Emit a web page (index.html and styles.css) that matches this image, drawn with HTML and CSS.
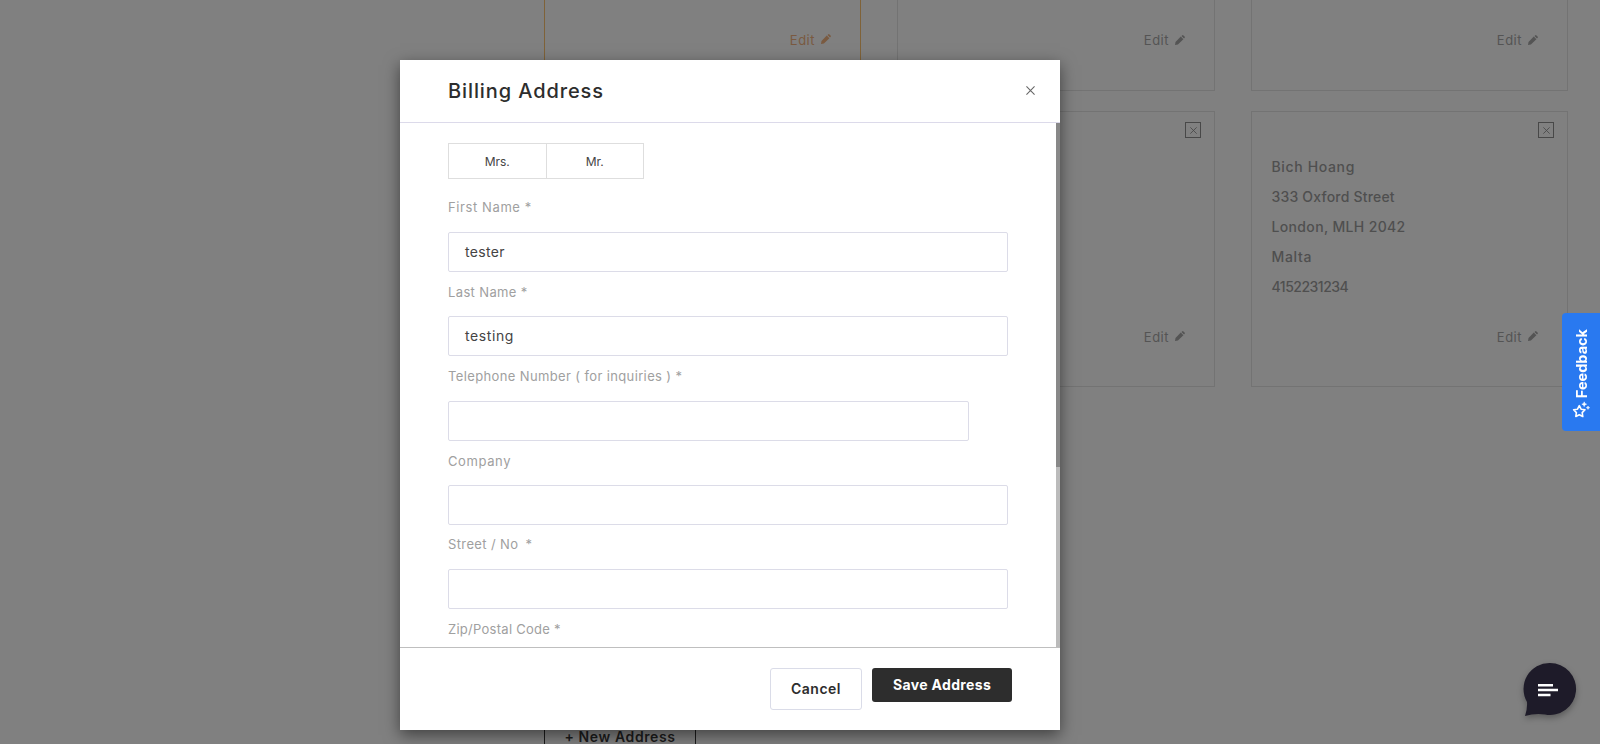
FILE: index.html
```html
<!DOCTYPE html>
<html lang="en">
<head>
<meta charset="utf-8">
<title>Billing Address</title>
<link rel="stylesheet" href="styles.css">
</head>
<body>
<svg class="sprite" aria-hidden="true">
  <symbol id="pencil" viewBox="0 0 10 10"><path d="M0 10l.5-2.900L5.800 1.600 8.400 4.200 2.900 9.500zM6.500 1L7.400.2q.4-.3.800 0L9.800 1.800q.3.400 0 .8L9 3.500z" fill="currentColor"/></symbol>
  <symbol id="cross" viewBox="0 0 10 10"><path d="M.5.5l9 9M9.500.5l-9 9" stroke="currentColor" stroke-width="1.200" fill="none"/></symbol>
</svg>

<main class="page">
  <div class="cards">
    <article class="card card-selected"><a class="edit">Edit <svg><use href="#pencil"/></svg></a></article>
    <article class="card"><a class="edit">Edit <svg><use href="#pencil"/></svg></a></article>
    <article class="card"><a class="edit">Edit <svg><use href="#pencil"/></svg></a></article>
    <article class="card"></article>
    <article class="card">
      <span class="remove"><svg><use href="#cross"/></svg></span>
      <a class="edit">Edit <svg><use href="#pencil"/></svg></a>
    </article>
    <article class="card">
      <span class="remove"><svg><use href="#cross"/></svg></span>
      <p class="address"><span class="name">Bich Hoang</span><span class="street">333 Oxford Street</span><span class="city">London, MLH 2042</span><span class="name">Malta</span><span class="phone">4152231234</span></p>
      <a class="edit">Edit <svg><use href="#pencil"/></svg></a>
    </article>
  </div>
  <button class="new-address">+ New Address</button>
</main>

<div class="backdrop">
  <section class="modal">
    <header class="modal-head">
      <h1>Billing Address</h1>
      <svg class="close"><use href="#cross"/></svg>
    </header>
    <div class="modal-body">
      <form class="form">
        <div class="titles"><span>Mrs.</span><span>Mr.</span></div>
        <label class="raised wide">First Name <i>*</i></label>
        <div class="input">tester</div>
        <label>Last Name <i>*</i></label>
        <div class="input roomy">testing</div>
        <label class="tall">Telephone Number ( for inquiries ) <i>*</i></label>
        <div class="input short"></div>
        <label class="wide">Company</label>
        <div class="input"></div>
        <label class="raised">Street / No &nbsp;<i class="near">*</i></label>
        <div class="input"></div>
        <label class="tight">Zip/Postal Code <i>*</i></label>
      </form>
      <div class="track"><div class="thumb"></div></div>
    </div>
    <footer class="modal-foot">
      <button class="cancel">Cancel</button>
      <button class="save">Save Address</button>
    </footer>
  </section>
</div>

<div class="feedback">
  <svg viewBox="0 0 18 18"><path d="M7.300 4.700l1.800 3.500 3.900.6-2.800 2.800.6 3.900-3.500-1.800-3.500 1.800.6-3.900L1.600 8.800l3.900-.6z" fill="none" stroke="#fff" stroke-width="1.600" stroke-linejoin="round"/><path d="M12.200.8l.7 1.700 1.700.7-1.700.7-.7 1.700-.7-1.700-1.700-.7 1.700-.7zM16 5l.5 1.200 1.200.5-1.200.5-.5 1.200-.5-1.200-1.200-.5 1.200-.5z" fill="#fff" stroke="#fff" stroke-width=".5"/></svg>
  <span>Feedback</span>
</div>

<svg class="chat" viewBox="0 0 56 56"><path d="M28 1a26 26 0 1 1-5 51.500Q13 51 3 54 5.500 47 5 40A26 26 0 0 1 28 1z" fill="#1e1b29"/><path d="M16 23.300h15M16 28h20M16 32.900h12.500" stroke="#fff" stroke-width="2.500"/></svg>
</body>
</html>
```
FILE: styles.css
```css
* { box-sizing: border-box; }
body {
  margin: 0;
  width: 1600px;
  height: 744px;
  overflow: hidden;
  background: #808080;
  font-family: Inter, "Open Sans", sans-serif;
  color: #2d2d2d;
}
.sprite { display: none; }
button { font: inherit; padding: 0; }

.page { padding-left: 544px; height: 744px; overflow: hidden; }
.cards {
  display: grid;
  grid-template-columns: 317px 318px 317px;
  grid-template-rows: 91px 276px;
  gap: 20px 36px;
}
.card { position: relative; border: 1px solid #737373; }
.card:nth-child(-n+3) { border-top: 0; }
.card-selected { border-color: #7f6238; }
.edit {
  position: absolute;
  right: 29px;
  bottom: 40px;
  display: flex;
  align-items: center;
  gap: 6px;
  font-size: 13px;
  line-height: 20px;
  letter-spacing: .5px;
  color: #545454;
}
.card:nth-child(n+4) .edit { bottom: 39px; }
.edit svg { width: 10px; height: 10px; margin-top: -1px; }
.card:nth-child(n+4) .edit svg, .card-selected .edit svg { margin-top: -3px; }
.card-selected .edit { color: #7a5a40; }
.remove {
  position: absolute;
  top: 10px;
  right: 13px;
  width: 16px;
  height: 16px;
  border: 1px solid #484848;
  color: #484848;
  display: grid;
  place-items: center;
}
.remove svg { width: 7px; height: 7px; }
.address {
  margin: 40px 0 0 19.500px;
  font-size: 14px;
  font-weight: 500;
  line-height: 30px;
  color: #4f4f4f;
}
.address span { display: block; }
.name { letter-spacing: .65px; }
.street { letter-spacing: .2px; }
.city { letter-spacing: .35px; }
.phone { letter-spacing: -.5px; }
.new-address {
  display: block;
  width: 152px;
  height: 44px;
  margin-top: 328px;
  border: 1px solid #1c1c1c;
  background: none;
  font-size: 14px;
  font-weight: 600;
  line-height: 16px;
  letter-spacing: .6px;
  color: #1c1c1c;
}

.backdrop { position: absolute; inset: 0; padding: 60px 0 0 400px; }
.modal {
  width: 660px;
  height: 670px;
  display: flex;
  flex-direction: column;
  background: #fff;
  box-shadow: 0 5px 15px rgba(0, 0, 0, .5);
}
.modal-head {
  height: 63px;
  display: flex;
  align-items: center;
  justify-content: space-between;
  padding: 0 25px 0 48px;
  border-bottom: 1px solid #dcdaea;
}
h1 { margin: 0; font-size: 20px; font-weight: 500; letter-spacing: .9px; }
.close { width: 9px; height: 9px; margin-top: -1px; color: #666; }
.modal-body { height: 524px; display: flex; justify-content: space-between; overflow: hidden; }
.form { width: 608px; padding: 20px 0 0 48px; }
.titles { display: flex; width: 196px; height: 36px; border: 1px solid #dedede; margin-bottom: 9px; }
.titles span { flex: 1; text-align: center; font-size: 12px; line-height: 35px; color: #444; }
.titles span + span { border-left: 1px solid #dedede; }
label {
  display: block;
  height: 44px;
  padding-top: 10px;
  font-size: 13px;
  line-height: 20px;
  letter-spacing: .37px;
  color: #a0a0a0;
  white-space: nowrap;
}
label i { font-style: normal; }
.wide { letter-spacing: .6px; }
.tight { letter-spacing: .27px; }
.raised { padding-top: 9px; }
.near { margin-left: -1px; }
.tall { height: 45px; }
.input {
  height: 40px;
  padding-left: 16px;
  border: 1px solid #dcdce8;
  border-radius: 2px;
  font-size: 14px;
  line-height: 38px;
  letter-spacing: .35px;
  color: #444;
}
.roomy { letter-spacing: .6px; }
.short { width: 521px; }
.track { width: 4px; background: #bbb; }
.thumb { height: 344px; background: #888; }
.modal-foot {
  height: 83px;
  display: flex;
  align-items: flex-start;
  justify-content: flex-end;
  gap: 10px;
  padding: 20px 48px 0 0;
  border-top: 1px solid #bfbfbf;
}
.cancel, .save { border-radius: 3px; font-size: 14px; padding-bottom: 2px; }
.cancel { width: 92px; height: 42px; border: 1px solid #dadce8; background: #fff; font-weight: 600; letter-spacing: .5px; color: #2d2d2d; }
.save { width: 140px; height: 34px; border: 0; background: #2d2d2d; font-weight: 700; letter-spacing: .35px; color: #fff; }

.feedback {
  position: absolute;
  right: 0;
  top: 313px;
  width: 38px;
  height: 118px;
  padding-bottom: 12px;
  display: flex;
  flex-direction: column-reverse;
  align-items: center;
  gap: 3px;
  border-radius: 4px 0 0 4px;
  background: #2979f0;
  color: #fff;
}
.feedback span {
  writing-mode: vertical-rl;
  transform: rotate(180deg);
  font-size: 14.500px;
  font-weight: 700;
}
.feedback svg { width: 18px; height: 18px; }
.chat {
  position: absolute;
  left: 1522px;
  top: 662px;
  width: 56px;
  height: 56px;
  filter: drop-shadow(0 3px 3px rgba(0, 0, 0, .3));
}
```
